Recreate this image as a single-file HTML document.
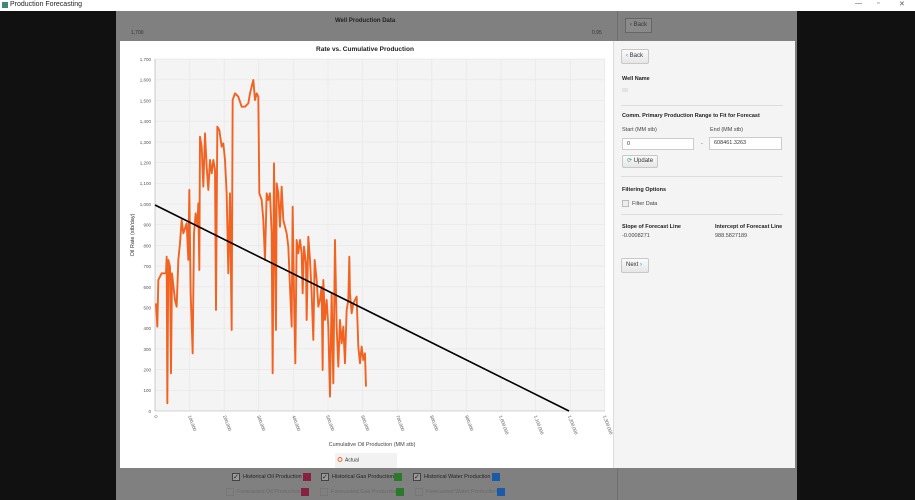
<!DOCTYPE html>
<html><head><meta charset="utf-8"><style>
*{margin:0;padding:0;box-sizing:border-box}
body{width:915px;height:500px;overflow:hidden;background:#111;font-family:"Liberation Sans",sans-serif;position:relative}
.abs{position:absolute}
.btn{position:absolute;border:1px solid #c8c8c8;background:linear-gradient(#fafafa,#e6e6e6);border-radius:2px;font-size:6px;color:#333;padding:0 0 0 4px;line-height:13px}
.lbl{position:absolute;font-size:5.5px;font-weight:bold;color:#222}
.t{position:absolute;font-size:5.5px;color:#444}
.inp{position:absolute;border:1px solid #ccc;background:#fff;font-size:5.5px;color:#333;padding-left:4px;line-height:11px}
.hr{position:absolute;height:1px;background:#ddd}
</style></head><body>
<div class="abs" style="left:0;top:0;width:915px;height:11px;background:#fff"></div>
<div class="abs" style="left:2px;top:2px;width:6px;height:6px;background:#3a8a7a"></div>
<div class="abs" style="left:10px;top:1px;font-size:7px;color:#222">Production Forecasting</div>
<div class="abs" style="left:855px;top:0;font-size:7px;color:#555">—</div>
<div class="abs" style="left:877px;top:0;font-size:7px;color:#555">▫</div>
<div class="abs" style="left:899px;top:0;font-size:7px;color:#555">✕</div>
<div class="abs" style="left:116px;top:11px;width:681px;height:489px;background:#808080"></div>
<div class="abs" style="left:617px;top:11px;width:1px;height:489px;background:#6e6e6e"></div>
<div class="abs" style="left:335px;top:18px;font-size:6px;font-weight:bold;color:#222">Well Production Data</div>
<div class="abs" style="left:131px;top:30px;font-size:5px;color:#333">1,700</div>
<div class="abs" style="left:592px;top:30px;font-size:5px;color:#333">0.95</div>
<div class="abs" style="left:625px;top:18px;width:27px;height:15px;border:1px solid #666;background:#8a8a8a;font-size:6px;color:#333;line-height:13px;padding-left:4px">‹ Back</div>
<div class="abs" style="left:120px;top:41px;width:675px;height:427px;background:#fff"></div>
<div class="abs" style="left:613px;top:41px;width:182px;height:427px;background:#f4f4f4;border-left:1px solid #ddd"></div>
<svg class="abs" style="left:0;top:0" width="915" height="500">
<text x="365" y="51" font-size="6.5" font-weight="bold" fill="#222" text-anchor="middle" font-family="Liberation Sans">Rate vs. Cumulative Production</text>
<rect x="155" y="59" width="450" height="352" fill="#f4f4f4"/>
<g stroke="#e6e6e6" stroke-width="0.6">
<line x1="155" x2="605" y1="390.3" y2="390.3"/><line x1="155" x2="605" y1="369.6" y2="369.6"/><line x1="155" x2="605" y1="348.9" y2="348.9"/><line x1="155" x2="605" y1="328.2" y2="328.2"/><line x1="155" x2="605" y1="307.5" y2="307.5"/><line x1="155" x2="605" y1="286.8" y2="286.8"/><line x1="155" x2="605" y1="266.1" y2="266.1"/><line x1="155" x2="605" y1="245.4" y2="245.4"/><line x1="155" x2="605" y1="224.7" y2="224.7"/><line x1="155" x2="605" y1="204" y2="204"/><line x1="155" x2="605" y1="183.3" y2="183.3"/><line x1="155" x2="605" y1="162.6" y2="162.6"/><line x1="155" x2="605" y1="141.9" y2="141.9"/><line x1="155" x2="605" y1="121.2" y2="121.2"/><line x1="155" x2="605" y1="100.5" y2="100.5"/><line x1="155" x2="605" y1="79.8" y2="79.8"/><line x1="155" x2="605" y1="59.1" y2="59.1"/>
<line y1="59" y2="411" x1="189.6" x2="189.6"/><line y1="59" y2="411" x1="224.2" x2="224.2"/><line y1="59" y2="411" x1="258.8" x2="258.8"/><line y1="59" y2="411" x1="293.4" x2="293.4"/><line y1="59" y2="411" x1="328" x2="328"/><line y1="59" y2="411" x1="362.6" x2="362.6"/><line y1="59" y2="411" x1="397.2" x2="397.2"/><line y1="59" y2="411" x1="431.8" x2="431.8"/><line y1="59" y2="411" x1="466.4" x2="466.4"/><line y1="59" y2="411" x1="501" x2="501" /><line y1="59" y2="411" x1="535.6" x2="535.6"/><line y1="59" y2="411" x1="570.2" x2="570.2"/><line y1="59" y2="411" x1="604.8" x2="604.8"/>
</g>
<line x1="155" y1="59" x2="155" y2="411" stroke="#aaa" stroke-width="0.6"/>
<line x1="155" y1="411" x2="605" y2="411" stroke="#aaa" stroke-width="0.6"/>
<g font-size="4.5" fill="#555" text-anchor="end" font-family="Liberation Sans">
<text x="151" y="413">0</text><text x="151" y="392">100</text><text x="151" y="371.5">200</text><text x="151" y="351">300</text><text x="151" y="330">400</text><text x="151" y="309.5">500</text><text x="151" y="289">600</text><text x="151" y="268">700</text><text x="151" y="247.5">800</text><text x="151" y="226.5">900</text><text x="151" y="206">1,000</text><text x="151" y="185">1,100</text><text x="151" y="164.5">1,200</text><text x="151" y="144">1,300</text><text x="151" y="123">1,400</text><text x="151" y="102.5">1,500</text><text x="151" y="81.5">1,600</text><text x="151" y="61">1,700</text>
</g>
<g font-size="4.5" fill="#555" font-family="Liberation Sans">
<text transform="translate(154,416) rotate(70)">0</text>
<text transform="translate(188,416) rotate(70)">100,000</text>
<text transform="translate(223,416) rotate(70)">200,000</text>
<text transform="translate(257,416) rotate(70)">300,000</text>
<text transform="translate(292,416) rotate(70)">400,000</text>
<text transform="translate(326,416) rotate(70)">500,000</text>
<text transform="translate(361,416) rotate(70)">600,000</text>
<text transform="translate(396,416) rotate(70)">700,000</text>
<text transform="translate(430,416) rotate(70)">800,000</text>
<text transform="translate(465,416) rotate(70)">900,000</text>
<text transform="translate(499,416) rotate(70)">1,000,000</text>
<text transform="translate(534,416) rotate(70)">1,100,000</text>
<text transform="translate(568,416) rotate(70)">1,200,000</text>
<text transform="translate(603,416) rotate(70)">1,300,000</text>
</g>
<text transform="translate(134,235) rotate(-90)" font-size="5.5" fill="#333" text-anchor="middle" font-family="Liberation Sans">Oil Rate (stb/day)</text>
<text x="372" y="446" font-size="5.5" fill="#444" text-anchor="middle" font-family="Liberation Sans">Cumulative Oil Production (MM stb)</text>
<g transform="translate(150,60) scale(0.3333)">
<polyline fill="none" stroke="#f26322" stroke-width="1.9" vector-effect="non-scaling-stroke" stroke-linejoin="round" points="18,730 22,800 25,660 35,640 48,640 50,590 52,1030 55,600 60,620 63,940 66,640 75,720 80,740 85,600 90,550 95,480 100,520 110,490 115,600 118,390 122,700 128,880 132,520 137,460 142,500 145,430 148,630 150,230 155,260 160,380 165,220 170,320 175,390 180,300 185,340 190,300 195,330 198,750 202,200 208,210 215,260 220,250 225,300 230,400 235,640 240,400 245,810 248,120 255,100 265,110 275,140 285,140 295,130 300,100 305,80 310,60 315,120 320,100 325,110 328,400 335,420 340,480 345,600 350,400 355,420 360,400 365,520 368,940 372,310 378,810 380,370 385,400 390,500 395,380 400,480 410,520 415,560 425,800 428,440 432,700 436,910 440,540 445,580 450,540 455,580 458,700 462,560 468,610 470,780 475,530 480,600 485,700 490,840 494,600 500,660 505,740 510,720 515,680 518,930 520,660 525,780 530,720 535,800 540,1010 545,700 550,970 555,540 560,800 565,920 570,780 575,850 580,800 585,910 590,750 595,720 598,590 600,700 605,760 610,730 615,720 620,710 625,860 630,910 635,860 640,900 645,880 648,980"/>
</g>
<line x1="155" y1="205" x2="569" y2="411" stroke="#000" stroke-width="1.6"/>
<rect x="335" y="453" width="62" height="15" fill="#f2f2f2"/>
<circle cx="340" cy="459.5" r="2" fill="none" stroke="#f26322" stroke-width="0.9"/>
<text x="345" y="461.5" font-size="5" fill="#333" font-family="Liberation Sans">Actual</text>
</svg>
<div class="btn" style="left:621px;top:49px;width:28px;height:15px"><span style="color:#2a7fc0">‹</span> Back</div>
<div class="lbl" style="left:622px;top:76px">Well Name</div>
<div class="abs" style="left:622px;top:88px;width:6px;height:4px;background:#e4e4e4"></div>
<div class="hr" style="left:621px;top:105px;width:162px"></div>
<div class="lbl" style="left:622px;top:113px">Comm. Primary Production Range to Fit for Forecast</div>
<div class="t" style="left:622px;top:127px">Start (MM stb)</div>
<div class="t" style="left:710px;top:127px">End (MM stb)</div>
<div class="inp" style="left:622px;top:138px;width:72px;height:12px">0</div>
<div class="t" style="left:701px;top:141px">-</div>
<div class="inp" style="left:709px;top:137px;width:73px;height:13px">608461.3263</div>
<div class="btn" style="left:622px;top:155px;width:36px;height:13px;line-height:11px"><span style="color:#3a9a7a">⟳</span> Update</div>
<div class="hr" style="left:621px;top:176px;width:162px"></div>
<div class="lbl" style="left:622px;top:187px">Filtering Options</div>
<div class="abs" style="left:622px;top:200px;width:7px;height:7px;border:1px solid #bbb;background:#eee"></div>
<div class="t" style="left:632px;top:201px">Filter Data</div>
<div class="hr" style="left:621px;top:214px;width:162px"></div>
<div class="lbl" style="left:622px;top:224px">Slope of Forecast Line</div>
<div class="lbl" style="left:715px;top:224px">Intercept of Forecast Line</div>
<div class="t" style="left:622px;top:233px">-0.0008271</div>
<div class="t" style="left:715px;top:233px">988.5827189</div>
<div class="btn" style="left:621px;top:258px;width:28px;height:15px">Next <span style="color:#2a7fc0">›</span></div>
<div class="abs" style="left:232px;top:473px;width:8px;height:8px;border:1px solid #444;background:#999;font-size:7px;line-height:7px;color:#222">✓</div>
<div class="abs" style="left:243px;top:474px;font-size:5.5px;color:#222">Historical Oil Production</div>
<div class="abs" style="left:303px;top:473px;width:8px;height:8px;background:#8a2040"></div>
<div class="abs" style="left:321px;top:473px;width:8px;height:8px;border:1px solid #444;background:#999;font-size:7px;line-height:7px;color:#222">✓</div>
<div class="abs" style="left:332px;top:474px;font-size:5.5px;color:#222">Historical Gas Production</div>
<div class="abs" style="left:394px;top:473px;width:8px;height:8px;background:#2a7a2a"></div>
<div class="abs" style="left:413px;top:473px;width:8px;height:8px;border:1px solid #444;background:#999;font-size:7px;line-height:7px;color:#222">✓</div>
<div class="abs" style="left:424px;top:474px;font-size:5.5px;color:#222">Historical Water Production</div>
<div class="abs" style="left:492px;top:473px;width:8px;height:8px;background:#1a5aaa"></div>
<div class="abs" style="left:226px;top:488px;width:8px;height:8px;border:1px solid #777"></div>
<div class="abs" style="left:237px;top:489px;font-size:5.5px;color:#6a6a6a">Forecasted Oil Production</div>
<div class="abs" style="left:301px;top:488px;width:8px;height:8px;background:#8a2040"></div>
<div class="abs" style="left:320px;top:488px;width:8px;height:8px;border:1px solid #777"></div>
<div class="abs" style="left:331px;top:489px;font-size:5.5px;color:#6a6a6a">Forecasted Gas Production</div>
<div class="abs" style="left:396px;top:488px;width:8px;height:8px;background:#2a7a2a"></div>
<div class="abs" style="left:415px;top:488px;width:8px;height:8px;border:1px solid #777"></div>
<div class="abs" style="left:426px;top:489px;font-size:5.5px;color:#6a6a6a">Forecasted Water Production</div>
<div class="abs" style="left:497px;top:488px;width:8px;height:8px;background:#1a5aaa"></div>
</body></html>
